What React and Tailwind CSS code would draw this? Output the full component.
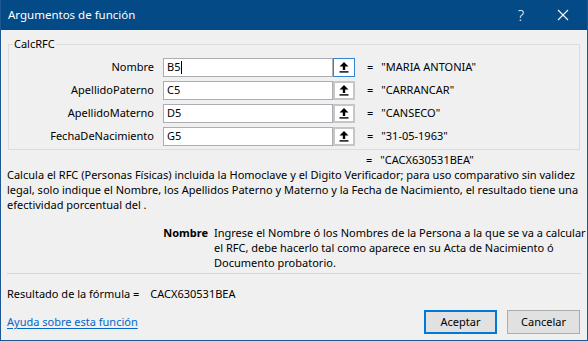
import React from "react";

const rows = [
  { label: "Nombre", ref: "B5", value: "MARIA ANTONIA", focused: true },
  { label: "ApellidoPaterno", ref: "C5", value: "CARRANCAR" },
  { label: "ApellidoMaterno", ref: "D5", value: "CANSECO" },
  { label: "FechaDeNacimiento", ref: "G5", value: "31-05-1963" },
];

// boton para contraer el dialogo y elegir rango
const RefButton = ({ focused }) => (
  <div
    className={`w-[22px] h-[19px] flex items-center justify-center bg-white ${
      focused ? "border border-[#2f86d6]" : "border-2 border-[#c6c6c6]"
    }`}
  >
    <svg width="10" height="11" viewBox="0 0 10 11">
      <path d="M5 0 L9.5 4.5 L6.2 4.5 L6.2 8 L3.8 8 L3.8 4.5 L0.5 4.5 Z" fill="#000" />
      <rect x="0.5" y="9.2" width="9" height="1.4" fill="#000" />
    </svg>
  </div>
);

export default function App() {
  return (
    <div className="w-[588px] h-[341px] bg-[#f0f0f0] border-x border-b border-[#1d5894] flex flex-col font-['Noto_Sans'] text-[11px] text-black overflow-hidden">
      {/* barra de titulo */}
      <div className="h-[30px] shrink-0 bg-[#034a87] text-white flex items-center pl-[8px] -mx-px">
        <span className="text-[11.5px] flex-1">Argumentos de función</span>
        <span className="text-[15px] font-light mr-[33px]">?</span>
        <svg width="12" height="12" viewBox="0 0 12 12" className="mr-[19px]">
          <path d="M1 1 L11 11 M11 1 L1 11" stroke="#fff" strokeWidth="1.1" />
        </svg>
      </div>

      <fieldset className="mx-[7px] mt-[6px] border border-[#dcdcdc] pt-[6px] pb-[3px]">
        <legend className="ml-[4px] px-[1px] leading-[16px]">CalcRFC</legend>
        <div className="flex flex-col gap-[4px]">
          {rows.map((r) => (
            <div key={r.label} className="flex items-center h-[19px]">
              <div className="w-[145px] text-right">{r.label}</div>
              <div className="ml-[9px] w-[170px] h-[19px] border border-[#abadb3] bg-white pl-[3px] flex items-center">
                <span>{r.ref}</span>
                {r.focused && <span className="w-px h-[13px] bg-black ml-[1px]" />}
              </div>
              <RefButton focused={r.focused} />
              <span className="ml-[12px]">=</span>
              <span className="ml-[8px]">"{r.value}"</span>
            </div>
          ))}
        </div>
      </fieldset>

      <div className="flex mt-[4px] leading-[12px] pl-[365px]">
        <span>=</span>
        <span className="ml-[8px]">"CACX630531BEA"</span>
      </div>

      <p className="mx-[6px] mt-[1px] leading-[15px] whitespace-nowrap">
        Calcula el RFC (Personas Físicas) incluida la Homoclave y el Digito Verificador; para uso comparativo sin validez
        <br />
        legal, solo indique el Nombre, los Apellidos Paterno y Materno y la Fecha de Nacimiento, el resultado tiene una
        <br />
        efectividad porcentual del .
      </p>

      <div className="flex mt-[13px] leading-[15px]">
        <div className="w-[207px] text-right font-bold">Nombre</div>
        <p className="ml-[6px] whitespace-nowrap">
          Ingrese el Nombre ó los Nombres de la Persona a la que se va a calcular
          <br />
          el RFC, debe hacerlo tal como aparece en su Acta de Nacimiento ó
          <br />
          Documento probatorio.
        </p>
      </div>

      <div className="mx-[6px] mt-[3px] h-px bg-[#d6d6d6]" />

      <div className="flex mx-[6px] mt-[12px] leading-[15px]">
        <span>Resultado de la fórmula =</span>
        <span className="ml-[11px]">CACX630531BEA</span>
      </div>

      <div className="flex items-center mt-[9px] pl-[6px] pr-[7px]">
        <a href="#" className="flex-1 text-[#0066cc] underline underline-offset-2">
          Ayuda sobre esta función
        </a>
        <button className="w-[73px] h-[24px] border-2 border-[#0078d7] bg-[#e1e1e1]">Aceptar</button>
        <button className="ml-[10px] w-[73px] h-[24px] border border-[#adadad] bg-[#e1e1e1]">Cancelar</button>
      </div>
    </div>
  );
}
